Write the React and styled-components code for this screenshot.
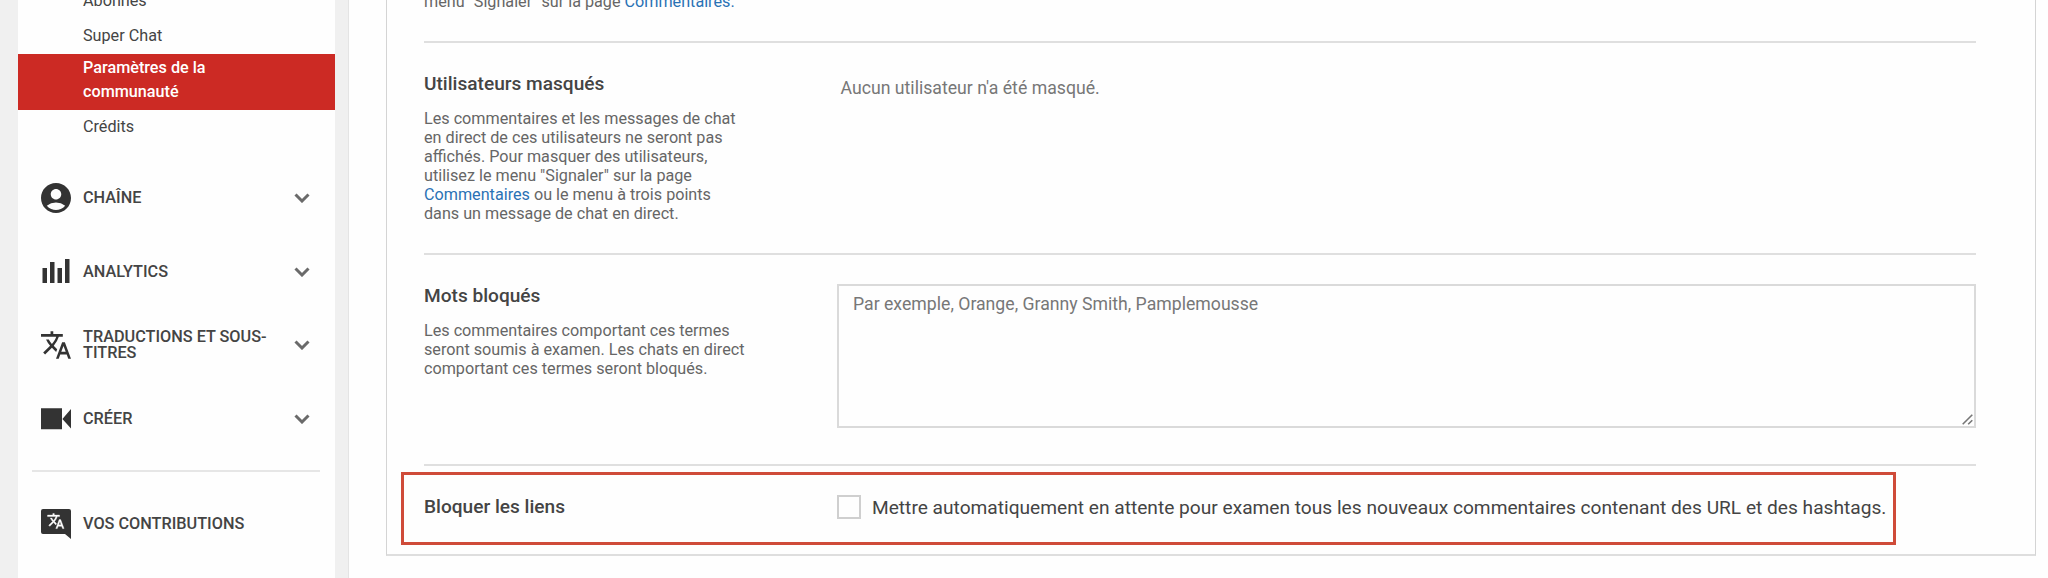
import React from "react";
import styled, { createGlobalStyle, css } from "styled-components";
import { MdAccountCircle, MdTranslate } from "react-icons/md";

const GlobalStyle = createGlobalStyle`
  * { box-sizing: border-box; }
  body {
    margin: 0;
    font-family: Roboto, sans-serif;
    background: #f0f0f0;
    overflow: hidden;
  }
`;

const Page = styled.div`
  display: flex;
  height: 578px;
  overflow: hidden;
  padding-left: 17.5px;
  background: #f0f0f0;
`;

const Sidebar = styled.nav`
  display: flex;
  flex-direction: column;
  width: 317px;
  flex: none;
  margin-right: 13.5px;
  background: #fefefe;
`;

const SubLink = styled.a`
  display: block;
  flex: none;
  height: 35px;
  padding-left: 65.5px;
  font-size: 16.2px;
  line-height: 33px;
  color: #444;

  &:first-child { margin-top: -16px; }

  ${(p) =>
    p.$active &&
    css`
      height: 56px;
      padding-top: 2px;
      padding-right: 100px;
      font-weight: 500;
      line-height: 23.5px;
      color: #fff;
      background: #cc2a24;
    `}
`;

const MenuGroup = styled.div`
  display: flex;
  flex-direction: column;
  margin-top: 16px;
`;

const MenuItem = styled.a`
  display: flex;
  align-items: center;
  flex: none;
  height: 73.8px;
  padding: 0 25px 0 23.5px;
`;

const IconSlot = styled.span`
  display: flex;
  width: 30px;
  height: 30px;
  margin-right: 12px;
  color: #333;
  svg { display: block; width: 30px; height: 30px; overflow: visible; }
`;

const MenuLabel = styled.span`
  flex: 1;
  max-width: 200px;
  margin-right: auto;
  font-size: 16.25px;
  font-weight: 500;
  line-height: 16px;
  color: #444;
`;

const Chevron = styled.svg`
  width: 16px;
  height: 10px;
  fill: none;
  stroke: #6a6a6a;
  stroke-width: 3;
`;

const SideDivider = styled.hr`
  flex: none;
  width: 288px;
  height: 2px;
  margin: 14px 0 15px 14.5px;
  border: 0;
  background: #e6e6e6;
`;

const Main = styled.main`
  flex: 1;
  padding: 0 12px 22px 37px;
  background: #fefefe;
  border-left: 1px solid #e4e4e4;
`;

const Card = styled.section`
  display: flex;
  flex-direction: column;
  height: 556px;
  padding: 0 59px 0 37px;
  border: 1px solid #d4d4d4;
  border-bottom-width: 2px;
  border-bottom-color: #dedede;
  border-top: 0;
`;

const Section = styled.div`
  display: flex;
  flex: none;
  height: ${(p) => p.$height}px;
  border-bottom: 2px solid #dfdfdf;
`;

const Info = styled.div`
  width: 413px;
  flex: none;
`;

const Title = styled.h3`
  margin: 0;
  padding-top: 30px;
  font-size: 19.1px;
  font-weight: 500;
  line-height: 22px;
  color: #444;
`;

const Description = styled.p`
  margin: ${(p) => (p.$continued ? "-8px" : "14px")} 0 0;
  font-size: 16.18px;
  line-height: 19.1px;
  color: #666;
  white-space: nowrap;
`;

const Link = styled.a`
  color: #2a72b5;
`;

const EmptyState = styled.p`
  margin: 34px 0 0 3.5px;
  font-size: 17.68px;
  line-height: 22px;
  color: #777;
`;

const WordsField = styled.div`
  position: relative;
  flex: 1;
  height: 144px;
  margin-top: 29px;
`;

const WordsInput = styled.textarea`
  display: block;
  width: 100%;
  height: 100%;
  margin: 0;
  padding: 7px 14px;
  border: 2px solid #dadada;
  border-radius: 0;
  outline: 0;
  background: #fefefe;
  font: 400 17.66px/22px Roboto, sans-serif;
  resize: none;
  &::placeholder { color: #777; opacity: 1; }
`;

const ResizeGrip = styled.svg`
  position: absolute;
  right: 3px;
  bottom: 3px;
  width: 11px;
  height: 11px;
  stroke: #777;
  stroke-width: 1.6;
`;

const Highlight = styled.div`
  display: flex;
  align-items: center;
  flex: none;
  width: 1495px;
  height: 73px;
  margin: 6px 0 0 -23px;
  padding: 0 0 4px 20px;
  border: 3px solid #cf4b39;
`;

const HighlightTitle = styled(Title)`
  width: 413px;
  padding: 0;
`;

const CheckLabel = styled.label`
  display: flex;
  align-items: center;
  font-size: 19.15px;
  line-height: 22px;
  color: #444;
  white-space: nowrap;
`;

const CheckText = styled.span`
  padding-top: 2px;
`;

const Checkbox = styled.input`
  appearance: none;
  width: 24px;
  height: 24px;
  margin: 0 11px 0 0;
  border: 2px solid #cfcfcf;
  background: #fefefe;
`;

const AnalyticsIcon = () => (
  <svg viewBox="0 0 30 30" fill="currentColor">
    <path d="M1.500 11h4.500v15H1.500zM9 5h4.500v21H9zM16.500 11h4.500v15h-4.500zM24 2h4.500v24H24z" />
  </svg>
);

const CameraIcon = () => (
  <svg viewBox="0 0 30 30" fill="currentColor">
    <path d="M0 4.3h21v21H0zM30 5v19.5L21.4 15z" />
  </svg>
);

const ContributionIcon = () => (
  <svg viewBox="0 0 30 30">
    <path fill="currentColor" d="M2 0h26a2 2 0 0 1 2 2v28l-6-5H2a2 2 0 0 1-2-2V2a2 2 0 0 1 2-2z" />
    <g transform="translate(5.8 3.1) scale(.75)" fill="#fefefe" stroke="#fefefe" strokeWidth=".5">
      <path d="m12.87 15.07-2.54-2.51.03-.03c1.74-1.94 2.98-4.17 3.71-6.53H17V4h-7V2H8v2H1v1.99h11.17C11.5 7.92 10.44 9.75 9 11.35 8.07 10.32 7.3 9.19 6.69 8h-2c.73 1.63 1.73 3.17 2.98 4.56l-5.09 5.02L4 19l5-5 3.11 3.11.76-2.04zM18.5 10h-2L12 22h2l1.12-3h4.75L21 22h2l-4.5-12zm-2.62 7 1.62-4.33L19.12 17h-3.24z" />
    </g>
  </svg>
);

const AccountIcon = styled(MdAccountCircle)`
  transform: scale(1.2);
`;

const TranslateIcon = styled(MdTranslate)`
  transform: scale(1.09);
`;

const menu = [
  { label: "CHAÎNE", icon: <AccountIcon /> },
  { label: "ANALYTICS", icon: <AnalyticsIcon /> },
  { label: "TRADUCTIONS ET SOUS-TITRES", icon: <TranslateIcon /> },
  { label: "CRÉER", icon: <CameraIcon /> },
];

export default function App() {
  return (
    <>
      <GlobalStyle />
      <Page>
        <Sidebar>
          <SubLink>Abonnés</SubLink>
          <SubLink>Super Chat</SubLink>
          <SubLink $active>Paramètres de la communauté</SubLink>
          <SubLink>Crédits</SubLink>
          <MenuGroup>
            {menu.map(({ label, icon }) => (
              <MenuItem key={label}>
                <IconSlot>{icon}</IconSlot>
                <MenuLabel>{label}</MenuLabel>
                <Chevron viewBox="0 0 16 10">
                  <path d="M1.5 1.5 8 8l6.5-6.5" />
                </Chevron>
              </MenuItem>
            ))}
          </MenuGroup>
          <SideDivider />
          <MenuItem>
            <IconSlot><ContributionIcon /></IconSlot>
            <MenuLabel>VOS CONTRIBUTIONS</MenuLabel>
          </MenuItem>
        </Sidebar>
        <Main>
          <Card>
            <Section $height={43}>
              <Info>
                <Description $continued>
                  menu "Signaler" sur la page <Link>Commentaires.</Link>
                </Description>
              </Info>
            </Section>
            <Section $height={212}>
              <Info>
                <Title>Utilisateurs masqués</Title>
                <Description>
                  Les commentaires et les messages de chat<br />
                  en direct de ces utilisateurs ne seront pas<br />
                  affichés. Pour masquer des utilisateurs,<br />
                  utilisez le menu "Signaler" sur la page<br />
                  <Link>Commentaires</Link> ou le menu à trois points<br />
                  dans un message de chat en direct.
                </Description>
              </Info>
              <EmptyState>Aucun utilisateur n'a été masqué.</EmptyState>
            </Section>
            <Section $height={211}>
              <Info>
                <Title>Mots bloqués</Title>
                <Description>
                  Les commentaires comportant ces termes<br />
                  seront soumis à examen. Les chats en direct<br />
                  comportant ces termes seront bloqués.
                </Description>
              </Info>
              <WordsField>
                <WordsInput placeholder="Par exemple, Orange, Granny Smith, Pamplemousse" />
                <ResizeGrip viewBox="0 0 11 11">
                  <path d="M.7 10.3 10.3.7M6.2 10.3l4.1-4.1" />
                </ResizeGrip>
              </WordsField>
            </Section>
            <Highlight>
              <HighlightTitle>Bloquer les liens</HighlightTitle>
              <CheckLabel>
                <Checkbox type="checkbox" />
                <CheckText>
                  Mettre automatiquement en attente pour examen tous les nouveaux commentaires contenant des URL et des hashtags.
                </CheckText>
              </CheckLabel>
            </Highlight>
          </Card>
        </Main>
      </Page>
    </>
  );
}
